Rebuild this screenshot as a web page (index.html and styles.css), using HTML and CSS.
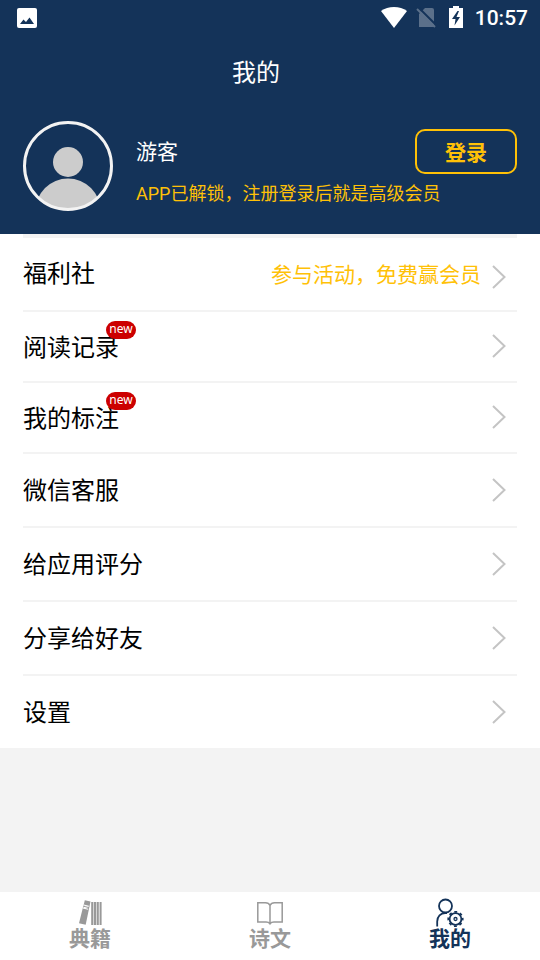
FILE: index.html
```html
<!DOCTYPE html>
<html lang="zh-CN">
<head>
<meta charset="utf-8">
<meta name="viewport" content="width=device-width, initial-scale=1">
<title>我的</title>
<link rel="stylesheet" href="styles.css">
</head>
<body>
<header class="header">
  <div class="status">
    <svg class="status-photo" width="20" height="20" viewBox="0 0 20 20" aria-hidden="true"><rect width="20" height="20" rx="2" fill="#fff"/><path d="M3 16l3.500-4.500 2.500 2.500 3.500-4.500 4.500 6.500z" fill="#143359"/></svg>
    <svg width="28" height="22" viewBox="0 0 28 22" aria-hidden="true"><path d="M1 4C8-1.200 20-1.200 27 4L14 21z" fill="#fff"/></svg>
    <svg width="20" height="22" viewBox="0 0 20 22" aria-hidden="true"><path d="M9 1h7a2 2 0 0 1 2 2v17H3V7z" fill="#5b708a"/><path d="M2 0l19 19" stroke="#143359" stroke-width="2"/><path d="M1 2l18 18" stroke="#5b708a" stroke-width="2"/></svg>
    <svg class="battery" width="14" height="22" viewBox="0 0 14 22" aria-hidden="true"><path d="M4 0h6v2h4v20H0V2h4z" fill="#fff"/><path d="M8.500 5L3 13h3.500L5.500 19.500 11 11H7.500L10 5z" fill="#143359"/></svg>
    <time class="clock">10:57</time>
  </div>
  <h1 class="title">我的</h1>
  <section class="profile">
    <svg class="avatar" width="90" height="90" viewBox="0 0 90 90" role="img" aria-label="头像"><defs><clipPath id="disc"><circle cx="45" cy="45" r="43"/></clipPath></defs><g fill="#ccc" clip-path="url(#disc)"><circle cx="45" cy="41" r="15"/><circle cx="45" cy="90" r="32.500"/></g><circle cx="45" cy="45" r="43.500" fill="none" stroke="#f3f3f3" stroke-width="3"/></svg>
    <div class="user">
      <div class="user-top"><span class="name">游客</span><button class="login" type="button">登录</button></div>
      <p class="note">APP已解锁，注册登录后就是高级会员</p>
    </div>
  </section>
</header>
<main>
  <nav class="menu">
    <a class="row first" href="#welfare"><span class="label">福利社</span><span class="promo">参与活动，免费赢会员</span><svg class="chevron" viewBox="0 0 14 24"><path d="M1 1l11.500 11L1 23"/></svg></a>
    <a class="row compact" href="#history"><span class="label">阅读记录<span class="badge">new</span></span><svg class="chevron" viewBox="0 0 14 24"><path d="M1 1l11.500 11L1 23"/></svg></a>
    <a class="row compact" href="#notes"><span class="label">我的标注<span class="badge">new</span></span><svg class="chevron" viewBox="0 0 14 24"><path d="M1 1l11.500 11L1 23"/></svg></a>
    <a class="row" href="#service"><span class="label">微信客服</span><svg class="chevron" viewBox="0 0 14 24"><path d="M1 1l11.500 11L1 23"/></svg></a>
    <a class="row" href="#rate"><span class="label">给应用评分</span><svg class="chevron" viewBox="0 0 14 24"><path d="M1 1l11.500 11L1 23"/></svg></a>
    <a class="row" href="#share"><span class="label">分享给好友</span><svg class="chevron" viewBox="0 0 14 24"><path d="M1 1l11.500 11L1 23"/></svg></a>
    <a class="row" href="#settings"><span class="label">设置</span><svg class="chevron" viewBox="0 0 14 24"><path d="M1 1l11.500 11L1 23"/></svg></a>
  </nav>
</main>
<nav class="tabs">
  <a class="tab" href="#books">
    <svg width="28" height="30" viewBox="0 0 28 30" aria-hidden="true"><path d="M8.800 3.200l5.700 1.200-4.800 23.400-6.700-1.600z" fill="#999"/><path d="M7.600 8l5.200 1.200M7 11l5.200 1.200M7.800 10.800l4.500-1.400" stroke="#fff" stroke-width="1.100"/><path d="M15.200 5h2.200v23h-2.200zM18 5h2v23h-2zM20.600 5h2.200v23h-2.200zM23.600 5h2v23h-2z" fill="#999"/></svg>
    <span>典籍</span>
  </a>
  <a class="tab" href="#poems">
    <svg width="28" height="30" viewBox="0 0 28 30" fill="none" stroke="#999" stroke-width="1.500" aria-hidden="true"><path d="M14 8.500C13 6.300 11.500 5.800 9.500 5.800H1.800V25H10c2 0 3 .300 4 1.800 1-1.500 2-1.800 4-1.800h8.200V5.800h-7.700c-2 0-3.500.500-4.500 2.700zM14 8.500v18"/></svg>
    <span>诗文</span>
  </a>
  <a class="tab active" href="#me" aria-current="page">
    <svg width="28" height="30" viewBox="0 0 28 30" fill="none" stroke="#143359" stroke-width="1.800" aria-hidden="true"><circle cx="9.500" cy="9" r="6.500"/><path d="M1.200 29.500v-5c0-5 3.500-8.500 8-8.500h1.800"/><circle cx="19.500" cy="22" r="5.900"/><circle cx="19.500" cy="22" r="7.200" stroke-width="1.800" stroke-dasharray="2.830 2.825" stroke-dashoffset="1.410"/><circle cx="19.500" cy="22" r="1.500" stroke-width="1.300"/></svg>
    <span>我的</span>
  </a>
</nav>
</body>
</html>
```
FILE: styles.css
```css
* { box-sizing: border-box; }
body {
  margin: 0;
  min-height: 100vh;
  display: flex;
  flex-direction: column;
  background: #f3f3f3;
  color: #000;
  font-family: Roboto, "Noto Sans CJK SC", sans-serif;
}
a { color: inherit; text-decoration: none; }
.header { background: #143359; color: #fff; }
.status {
  display: flex;
  align-items: center;
  gap: 8px;
  height: 36px;
  padding: 0 12px 0 17px;
}
.status-photo { margin-right: auto; }
.battery { margin: 0 4px 2px 5px; }
.clock { font-size: 21px; font-weight: 500; line-height: 24px; }
.title {
  margin: 0;
  padding: 1px 28px 0 0;
  font-size: 24px;
  font-weight: 400;
  line-height: 72px;
  text-align: center;
}
.profile {
  display: flex;
  align-items: center;
  gap: 23px;
  padding: 12px 23px 23px;
}
.avatar { flex: none; }
.user { flex: 1; padding-top: 4px; }
.user-top { display: flex; align-items: center; justify-content: space-between; }
.name { font-size: 21px; line-height: 30px; }
.login {
  width: 102px;
  height: 45px;
  padding: 3px 0 0;
  border: 2px solid #ffc107;
  border-radius: 10px;
  background: none;
  color: #ffc107;
  font: 700 21px/30px Roboto, "Noto Sans CJK SC", sans-serif;
}
.note { margin: 7px 0 0; color: #ffc107; font-size: 18px; line-height: 26px; }
main { flex: 1; }
.menu { padding: 0 23px; background: #fff; }
.row {
  display: flex;
  align-items: center;
  min-height: 74px;
  padding-right: 11px;
  border-bottom: 2px solid #f3f3f3;
}
.first { min-height: 78px; border-top: 4px solid #f3f3f3; }
.compact { min-height: 71px; }
.row:last-child { min-height: 72px; border-bottom: 0; }
.label { position: relative; padding-top: 2px; font-size: 24px; line-height: 36px; }
.first .label { padding-top: 0; }
.promo { margin-left: auto; padding-top: 2px; color: #ffc107; font-size: 21px; line-height: 30px; }
.chevron {
  width: 14px;
  height: 24px;
  margin-left: auto;
  fill: none;
  stroke: #c4c4c4;
  stroke-width: 2;
}
.compact .chevron { margin-bottom: 2px; }
.promo + .chevron { margin: 5px 0 0 11px; }
.badge {
  position: absolute;
  top: -7px;
  right: -17px;
  width: 30px;
  height: 18px;
  border-radius: 9px;
  background: #c00;
  color: #fff;
  font: 12px/16px "Noto Sans", sans-serif;
  text-align: center;
}
.tabs { display: grid; grid-template-columns: repeat(3, 1fr); height: 68px; background: #fff; }
.tab {
  display: flex;
  flex-direction: column;
  align-items: center;
  padding-top: 5px;
  color: #999;
  font-size: 21px;
  font-weight: 700;
  line-height: 24px;
}
.active { color: #143359; }
```
